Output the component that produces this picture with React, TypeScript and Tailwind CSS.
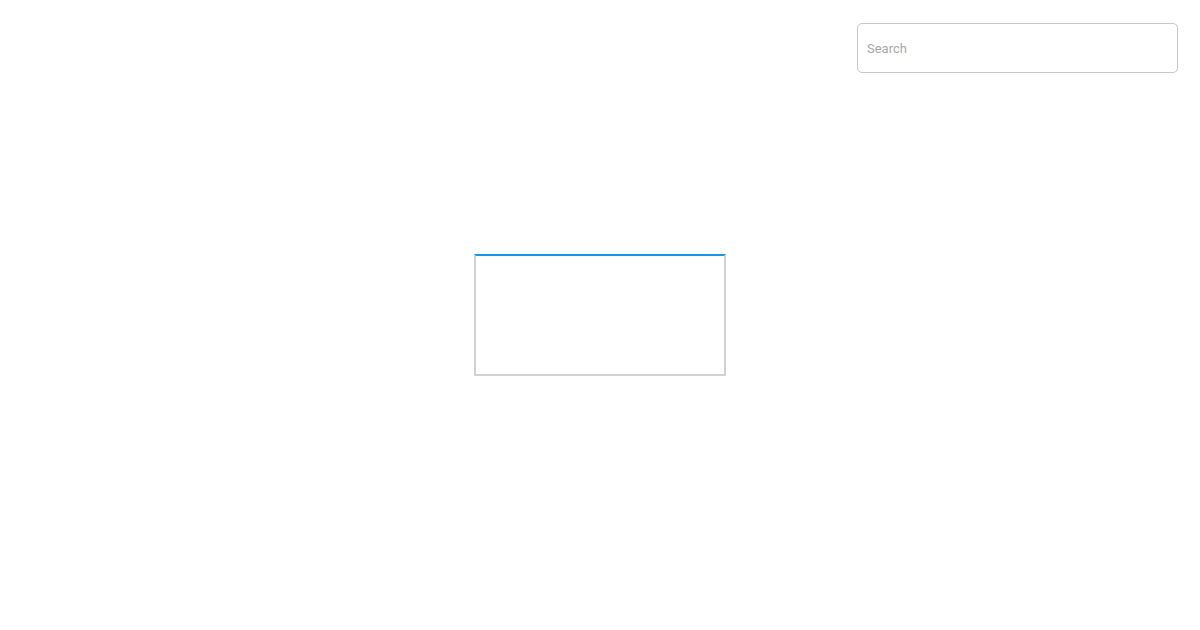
export default function App() {
  return (
    <div className="relative flex h-[630px] w-[1200px] items-center justify-center bg-white font-['Roboto',sans-serif]">
      <div className="absolute right-[22px] top-[23px]">
        <input
          type="search"
          placeholder="Search"
          className="h-[50px] w-[321px] rounded-[5px] border border-[#c8c8c8] bg-white px-[9px] text-[13px] text-[#333] placeholder:text-[#a8a8a8] focus:outline-none"
        />
      </div>
      <div className="h-[122px] w-[252px] border-2 border-[#d2d2d2] border-t-[#1a98e6] bg-white" />
    </div>
  );
}
